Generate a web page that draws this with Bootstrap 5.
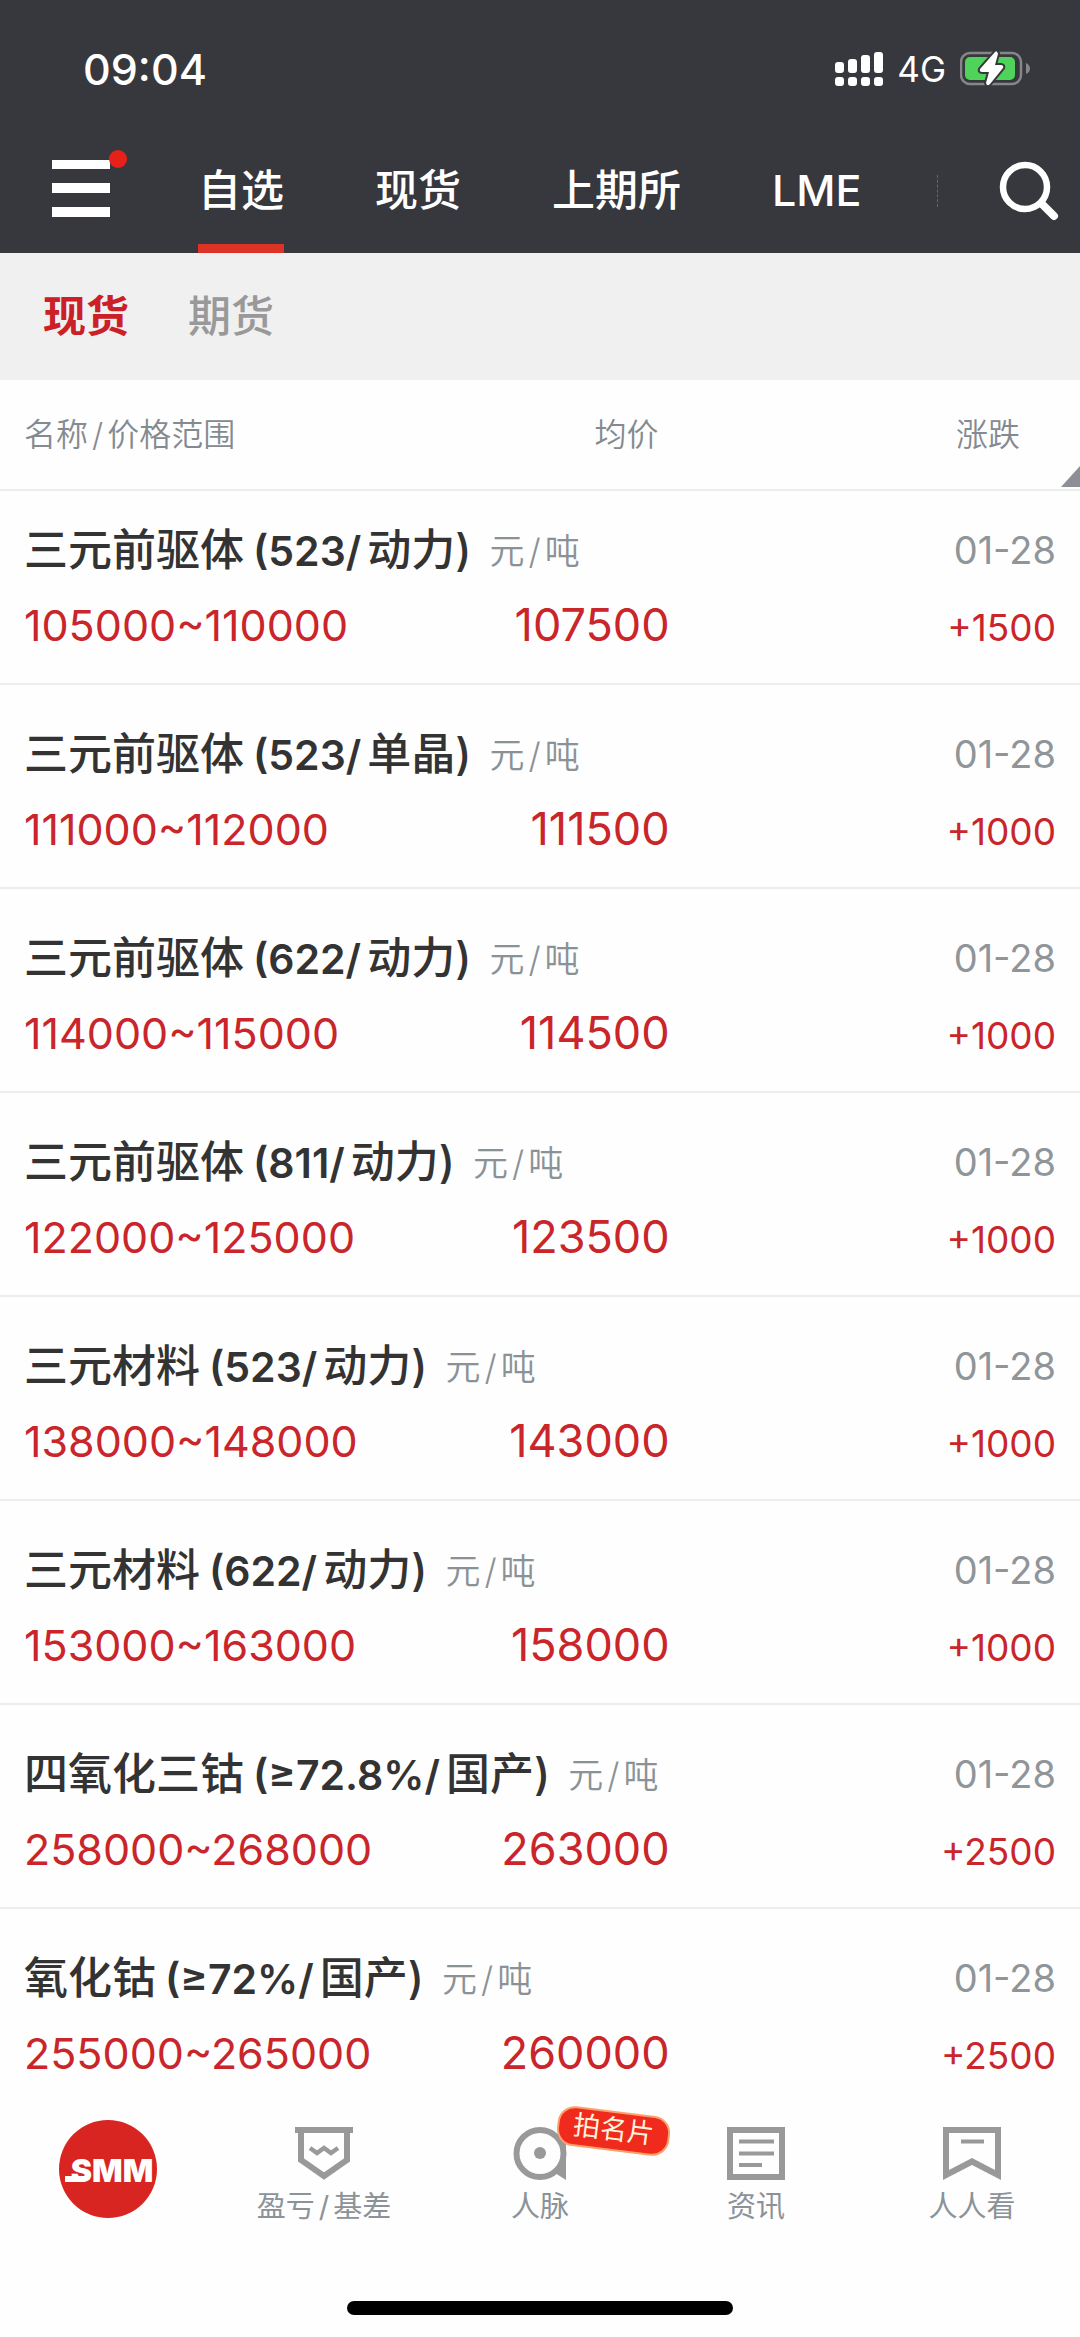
<!DOCTYPE html>
<html lang="zh-CN">
<head>
<meta charset="utf-8">
<meta name="viewport" content="width=device-width, initial-scale=1">
<title>SMM 自选</title>
<link href="https://cdn.jsdelivr.net/npm/bootstrap@5.3.0/dist/css/bootstrap.min.css" rel="stylesheet">
<style>
  body { font-family: Inter, "Noto Sans CJK SC", sans-serif; background: #fefefe; color: #333; }
  svg { display: block; flex: none; }
  a { text-decoration: none; }
  i { font-style: normal; margin: 0 4px; }
  .top { background: #37383d; color: #fff; }
  .status { height: 140px; padding: 0 50px 2px 83px; font-size: 43px; font-weight: 500; }
  .status-right { gap: 14px; }
  .status-net { font-size: 35px; font-weight: 400; }
  .mainbar { height: 113px; padding: 0 19px 0 52px; }
  .menu-btn, .find-btn { border: 0; background: none; padding: 0; color: #fff; }
  .menu-btn { padding-bottom: 26px; }
  .find-btn { padding-bottom: 10px; }
  .tabs { margin-left: 70px; gap: 91px; font-size: 43px; font-weight: 500; height: 113px; }
  .tabs a { color: #fff; height: 113px; line-height: 101px; border-bottom: 9px solid transparent; white-space: nowrap; }
  .tabs a.active { border-color: #dd3226; }
  .tabs .sliver { height: 32px; border-left: 1px dashed #66676c; margin: 0 0 12px -16px; }
  .subtabs { background: #f0f0f0; height: 127px; padding: 0 43px; gap: 59px; font-size: 43px; }
  .subtabs a { color: #999; font-weight: 500; }
  .subtabs a.active { color: #cb2027; font-weight: 700; }
  .quotes { table-layout: fixed; width: 100%; border-collapse: separate; border-spacing: 0; white-space: nowrap; }
  .quotes th { height: 111px; padding: 0; font-size: 32px; font-weight: 350; color: #848b90; border-bottom: 2px solid #ededef; }
  .quotes td { padding: 44px 0 33px; vertical-align: bottom; border-bottom: 2px solid #ededef; color: #c9252b; }
  .quotes tbody tr:first-child td { padding-top: 34px; }
  .quotes tbody tr:last-child td { border-bottom: 0; padding-bottom: 15px; }
  .quotes th:first-child, .quotes td:first-child { padding-left: 24px; width: 45%; }
  .quotes th:nth-child(2) { width: 17%; padding-right: 11px; }
  .quotes th:last-child { position: relative; padding-right: 60px; }
  .quotes td:last-child { padding-right: 24px; }
  .corner { position: absolute; right: 0; bottom: 2px; }
  .ln { font-size: 43px; line-height: 50px; height: 50px; }
  .ln + .ln { margin-top: 25px; }
  .ln span { line-height: 1; }
  .item-name { font-size: 44px; font-weight: 500; color: #333; }
  .item-name span { font-size: 41px; font-weight: 600; margin: 0 6px 0 9px; }
  .ln .item-unit { font-size: 35px; font-weight: 350; color: #8b9296; margin-left: 18px; vertical-align: 2px; }
  .item-avg { font-size: 45px; }
  .ln-date { font-size: 38px; color: #8f9598; }
  .item-diff { font-size: 37px; }
  .bottom { padding: 32px 0 22px; }
  .bottom nav { height: 174px; }
  .bottom nav a { flex: 1 1 0; color: #8b9399; font-size: 29px; line-height: 44px; }
  .bottom nav a svg { margin-bottom: 5px; }
  .bottom nav a.home svg { margin-top: -7px; }
  .pic { position: relative; }
  .promo { position: absolute; left: 50%; top: -16px; margin-left: 17px; width: 113px; height: 40px; border: 2px solid #fda06b; border-radius: 17px; background: #f02a1d; color: #fff3dc; font-size: 27px; line-height: 34px; text-align: center; transform: rotate(7deg); }
  .grip { width: 386px; height: 14px; border-radius: 7px; background: #000; }
</style>
<script src="https://cdn.jsdelivr.net/npm/bootstrap@5.3.0/dist/js/bootstrap.bundle.min.js"></script>
</head>
<body class="d-flex flex-column min-vh-100">
<header class="top">
  <div class="status d-flex align-items-center justify-content-between">
    <span>09:04</span>
    <div class="status-right d-flex align-items-center">
      <svg width="48" height="36" viewBox="0 0 48 36" fill="#fff" aria-hidden="true">
        <rect x="0" y="11" width="9" height="11" rx="3"/><rect x="13" y="8" width="9" height="14" rx="3"/><rect x="26" y="4" width="9" height="18" rx="3"/><rect x="39" y="1" width="9" height="21" rx="3"/>
        <rect x="0" y="26" width="9" height="9" rx="3"/><rect x="13" y="26" width="9" height="9" rx="3"/><rect x="26" y="26" width="9" height="9" rx="3"/><rect x="39" y="26" width="9" height="9" rx="3"/>
      </svg>
      <span class="status-net">4G</span>
      <svg width="70" height="36" viewBox="0 0 70 36" aria-hidden="true">
        <rect x="1" y="2" width="60" height="31" rx="9" fill="none" stroke="#85868a" stroke-width="2.5"/>
        <rect x="5" y="6" width="50" height="23" rx="5" fill="#4fd35b"/>
        <path d="M66 12v11q4-2 4-5.500t-4-5.500z" fill="#85868a"/>
        <path d="M35 1 20 18q-1 3 2 3h7l-3 11q1 4 4 1L43 17q1-3-2-3h-6l3-11q-1-4-3-2z" fill="#fff" stroke="#37383d" stroke-width="4" paint-order="stroke"/>
      </svg>
    </div>
  </div>
  <div class="mainbar d-flex align-items-center">
    <button class="menu-btn" type="button" aria-label="菜单">
      <svg width="76" height="68" viewBox="0 0 76 68" fill="#fff" aria-hidden="true">
        <path d="M0 10h58v9H0zM0 33h58v10H0zM0 57h58v10H0z"/><circle cx="66" cy="9" r="9" fill="#e8201a"/>
      </svg>
    </button>
    <nav class="tabs d-flex align-items-center flex-grow-1">
      <a class="active" href="#">自选</a><a href="#">现货</a><a href="#">上期所</a><a href="#">LME</a><span class="sliver"></span>
    </nav>
    <button class="find-btn" type="button" aria-label="搜索">
      <svg width="62" height="62" viewBox="0 0 62 62" fill="none" stroke="#fff" stroke-linecap="round" aria-hidden="true">
        <circle cx="26" cy="26" r="22" stroke-width="6.500"/><path d="M43 43 55 55" stroke-width="8"/>
      </svg>
    </button>
  </div>
</header>
<nav class="subtabs d-flex align-items-center"><a class="active" href="#">现货</a><a href="#">期货</a></nav>
<main>
<table class="quotes">
  <thead><tr>
    <th>名称<i>/</i>价格范围</th><th class="text-end">均价</th>
    <th class="text-end">涨跌<svg class="corner" width="19" height="21" viewBox="0 0 19 21" aria-hidden="true"><path d="M19 0v21H0z" fill="#8c8f96"/></svg></th>
  </tr></thead>
  <tbody>
  <tr><td><div class="ln"><span class="item-name">三元前驱体<span>(523/</span>动力)</span><span class="item-unit">元<i>/</i>吨</span></div><div class="ln">105000~110000</div></td><td class="text-end"><div class="ln"><span class="item-avg">107500</span></div></td><td class="text-end"><div class="ln ln-date">01-28</div><div class="ln"><span class="item-diff">+1500</span></div></td></tr>
  <tr><td><div class="ln"><span class="item-name">三元前驱体<span>(523/</span>单晶)</span><span class="item-unit">元<i>/</i>吨</span></div><div class="ln">111000~112000</div></td><td class="text-end"><div class="ln"><span class="item-avg">111500</span></div></td><td class="text-end"><div class="ln ln-date">01-28</div><div class="ln"><span class="item-diff">+1000</span></div></td></tr>
  <tr><td><div class="ln"><span class="item-name">三元前驱体<span>(622/</span>动力)</span><span class="item-unit">元<i>/</i>吨</span></div><div class="ln">114000~115000</div></td><td class="text-end"><div class="ln"><span class="item-avg">114500</span></div></td><td class="text-end"><div class="ln ln-date">01-28</div><div class="ln"><span class="item-diff">+1000</span></div></td></tr>
  <tr><td><div class="ln"><span class="item-name">三元前驱体<span>(811/</span>动力)</span><span class="item-unit">元<i>/</i>吨</span></div><div class="ln">122000~125000</div></td><td class="text-end"><div class="ln"><span class="item-avg">123500</span></div></td><td class="text-end"><div class="ln ln-date">01-28</div><div class="ln"><span class="item-diff">+1000</span></div></td></tr>
  <tr><td><div class="ln"><span class="item-name">三元材料<span>(523/</span>动力)</span><span class="item-unit">元<i>/</i>吨</span></div><div class="ln">138000~148000</div></td><td class="text-end"><div class="ln"><span class="item-avg">143000</span></div></td><td class="text-end"><div class="ln ln-date">01-28</div><div class="ln"><span class="item-diff">+1000</span></div></td></tr>
  <tr><td><div class="ln"><span class="item-name">三元材料<span>(622/</span>动力)</span><span class="item-unit">元<i>/</i>吨</span></div><div class="ln">153000~163000</div></td><td class="text-end"><div class="ln"><span class="item-avg">158000</span></div></td><td class="text-end"><div class="ln ln-date">01-28</div><div class="ln"><span class="item-diff">+1000</span></div></td></tr>
  <tr><td><div class="ln"><span class="item-name">四氧化三钴<span>(≥72.8%/</span>国产)</span><span class="item-unit">元<i>/</i>吨</span></div><div class="ln">258000~268000</div></td><td class="text-end"><div class="ln"><span class="item-avg">263000</span></div></td><td class="text-end"><div class="ln ln-date">01-28</div><div class="ln"><span class="item-diff">+2500</span></div></td></tr>
  <tr><td><div class="ln"><span class="item-name">氧化钴<span>(≥72%/</span>国产)</span><span class="item-unit">元<i>/</i>吨</span></div><div class="ln">255000~265000</div></td><td class="text-end"><div class="ln"><span class="item-avg">260000</span></div></td><td class="text-end"><div class="ln ln-date">01-28</div><div class="ln"><span class="item-diff">+2500</span></div></td></tr>
  </tbody>
</table>
</main>
<footer class="bottom mt-auto">
  <nav class="d-flex">
    <a class="home d-flex flex-column align-items-center" href="#" aria-label="SMM">
      <svg width="98" height="98" viewBox="0 0 98 98"><circle cx="49" cy="49" r="49" fill="#d92522"/><path d="M6 56h20v6H6z" fill="#fff"/><text x="53" y="62" text-anchor="middle" font-family="Inter, sans-serif" font-size="32" font-weight="900" fill="#fff">SMM</text></svg>
    </a>
    <a class="d-flex flex-column align-items-center" href="#">
      <svg width="58" height="53" viewBox="0 0 58 53" fill="none" stroke="#999" aria-hidden="true"><path d="M0 3h58" stroke-width="6"/><path d="M6 3v30l23 16 23-16V3" stroke-width="6"/><path d="m15 21 7 5 7-5 7 5 7-5" stroke-width="4.500"/></svg>
      <span>盈亏<i>/</i>基差</span>
    </a>
    <a class="pic d-flex flex-column align-items-center" href="#">
      <svg width="54" height="53" viewBox="0 0 54 53" aria-hidden="true"><circle cx="27" cy="26.500" r="23.500" fill="none" stroke="#999" stroke-width="6"/><circle cx="27" cy="26" r="6" fill="#999"/><path d="M48 16h5v37l-11-7 6-11z" fill="#999"/></svg>
      <span>人脉</span><span class="promo">拍名片</span>
    </a>
    <a class="d-flex flex-column align-items-center" href="#">
      <svg width="58" height="53" viewBox="0 0 58 53" fill="none" stroke="#999" aria-hidden="true"><path d="M3 3h52v47H3z" stroke-width="6"/><path d="M12 14.500h35M12 26.500h35M12 38h23" stroke-width="4"/></svg>
      <span>资讯</span>
    </a>
    <a class="d-flex flex-column align-items-center" href="#">
      <svg width="58" height="53" viewBox="0 0 58 53" fill="none" stroke="#999" aria-hidden="true"><path d="M3 3h52v45L29 34.500 3 48z" stroke-width="6"/><path d="M18 14.500h23" stroke-width="4"/></svg>
      <span>人人看</span>
    </a>
  </nav>
  <div class="grip mx-auto"></div>
</footer>
</body>
</html>
